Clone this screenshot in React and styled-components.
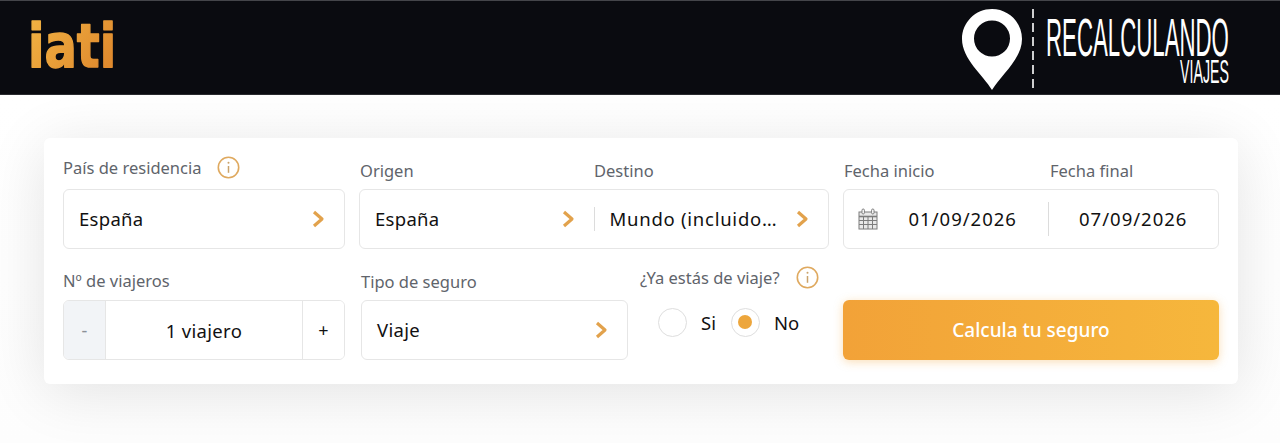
import styled, { createGlobalStyle } from "styled-components"

const GlobalStyle = createGlobalStyle`
  html, body {
    margin: 0;
    height: 100%;
    background: #fff;
    overflow: hidden;
  }
  * {
    box-sizing: border-box;
  }
  body {
    font-family: "Noto Sans", "Open Sans", sans-serif;
  }
`

const Chevron = () => (
  <ChevronSvg viewBox="0 0 14 18">
    <polyline points="3,2 11,9 3,16" fill="none" stroke="#e2a24c" strokeWidth="3.2" strokeLinejoin="round" />
  </ChevronSvg>
)

const InfoIcon = () => (
  <InfoSvg viewBox="0 0 23 23">
    <circle cx="11.5" cy="11.5" r="10.2" fill="none" stroke="#dfa95f" strokeWidth="1.6" />
    <circle cx="11.5" cy="6.800" r="1" fill="#c9a26a" />
    <line x1="11.5" y1="10" x2="11.5" y2="16.8" stroke="#c9a26a" strokeWidth="1.5" />
  </InfoSvg>
)

const CalendarIcon = () => (
  <CalendarSvg viewBox="0 0 20 22" fill="none" stroke="#7d7d7d" strokeWidth="1">
    <rect x="1" y="4" width="18" height="17" fill="#e9e9e9" />
    <line x1="1" y1="8.5" x2="19" y2="8.5" strokeWidth="1.6" />
    <path d="M1 12.5H19M1 16.5H19M5.5 8.5V21M10 8.5V21M14.5 8.5V21" />
    <rect x="4" y="1" width="2.4" height="5" rx="1.2" fill="#fff" />
    <rect x="13.6" y="1" width="2.4" height="5" rx="1.2" fill="#fff" />
  </CalendarSvg>
)

const App = () => {
  return (
    <>
      <GlobalStyle />
      <Header>
        <svg width="96" height="80" viewBox="0 0 96 80">
          <defs>
            <linearGradient id="iatiFill" x1="0" y1="0" x2="1" y2="0.6">
              <stop offset="0" stopColor="#f2b544" />
              <stop offset="1" stopColor="#df8a2e" />
            </linearGradient>
          </defs>
          <IatiText transform="translate(0 58) scale(0.8 1)">iati</IatiText>
        </svg>
        <svg width="272" height="86" viewBox="0 0 272 86">
          <path
            d="M30 0C13.4 0 0 13.4 0 30C0 50 21 66 30 81C39 66 60 50 60 30C60 13.4 46.6 0 30 0ZM30 11.500A18 18 0 1 1 30 47.500A18 18 0 1 1 30 11.500Z"
            fill="#fff"
            fillRule="evenodd"
          />
          <line x1="71" y1="0" x2="71" y2="81" stroke="#fff" strokeWidth="1.6" strokeDasharray="9 5" />
          <LogoText transform="translate(84 47) scale(0.412 1)" fontSize="54">RECALCULANDO</LogoText>
          <LogoText transform="translate(218 74) scale(0.418 1)" fontSize="34">VIAJES</LogoText>
        </svg>
      </Header>
      <Main>
        <Card>
          <TopRow>
            <Field>
              <Label $gap={16} $bottom={10}>País de residencia <InfoIcon /></Label>
              <Box>
                <Value>España</Value>
                <Chevron />
              </Box>
            </Field>
            <Field>
              <LabelPair>
                <Label>Origen</Label>
                <Label>Destino</Label>
              </LabelPair>
              <Box>
                <HalfSelect>
                  <Value>España</Value>
                  <Chevron />
                </HalfSelect>
                <Divider $short />
                <HalfSelect>
                  <Value $spread>Mundo (incluido…</Value>
                  <Chevron />
                </HalfSelect>
              </Box>
            </Field>
            <Field>
              <DateLabels>
                <Label>Fecha inicio</Label>
                <Label>Fecha final</Label>
              </DateLabels>
              <DateBox>
                <CalendarIcon />
                <DateValue>01/09/2026</DateValue>
                <Divider />
                <DateValue>07/09/2026</DateValue>
              </DateBox>
            </Field>
          </TopRow>
          <BottomRow>
            <Field>
              <Label $bottom={8}>Nº de viajeros</Label>
              <Stepper>
                <StepButton $muted>-</StepButton>
                <StepValue>1 viajero</StepValue>
                <StepButton>+</StepButton>
              </Stepper>
            </Field>
            <MiddleGroup>
              <Field>
                <Label $bottom={7}>Tipo de seguro</Label>
                <Box>
                  <Value>Viaje</Value>
                  <Chevron />
                </Box>
              </Field>
              <TripField>
                <Label $gap={16}>¿Ya estás de viaje? <InfoIcon /></Label>
                <RadioRow>
                  <Radio />
                  <RadioLabel>Si</RadioLabel>
                  <Radio $checked />
                  <RadioLabel>No</RadioLabel>
                </RadioRow>
              </TripField>
            </MiddleGroup>
            <SubmitButton>Calcula tu seguro</SubmitButton>
          </BottomRow>
        </Card>
      </Main>
    </>
  )
}

const Header = styled.header`
  height: 95px;
  background: #0a0b10;
  border-top: 1px solid #44454a;
  border-bottom: 1px solid #2a2b2f;
  display: flex;
  align-items: flex-start;
  justify-content: space-between;
  padding: 8px 46px 0 28px;
`

const IatiText = styled.text`
  font-family: "DejaVu Sans", sans-serif;
  font-weight: 700;
  font-size: 60px;
  fill: url(#iatiFill);
  stroke: url(#iatiFill);
  stroke-width: 1.5;
  stroke-linejoin: round;
`

const LogoText = styled.text`
  font-family: "Liberation Sans", sans-serif;
  fill: #fff;
`

const Main = styled.main`
  height: 348px;
  padding: 43px 42px 0 44px;
  background: linear-gradient(#fff, #fdfdfd);
`

const Card = styled.section`
  height: 246px;
  padding: 0 19px;
  background: #fff;
  border-radius: 6px;
  box-shadow: 0 8px 60px rgba(0, 0, 0, 0.11);
`

const TopRow = styled.div`
  display: grid;
  grid-template-columns: 282px 470px 376px;
  column-gap: 14px;
  align-items: end;
  height: 111px;
`

const BottomRow = styled.div`
  display: grid;
  grid-template-columns: 282px 470px 376px;
  column-gap: 14px;
  align-items: end;
  height: 111px;
`

const MiddleGroup = styled.div`
  display: grid;
  grid-template-columns: 267px 1fr;
  column-gap: 12px;
  align-items: start;
  padding: 0 0 0 2px;
`

const Field = styled.div`
  display: flex;
  flex-direction: column;
  min-width: 0;
`

const TripField = styled(Field)`
  margin-top: -4px;
`

const Label = styled.div`
  display: flex;
  align-items: center;
  gap: ${(p) => p.$gap || 0}px;
  height: 24px;
  margin-bottom: ${(p) => p.$bottom || 7}px;
  color: #60646b;
  font-size: 16.5px;
  white-space: nowrap;
`

const LabelPair = styled.div`
  display: grid;
  grid-template-columns: 234px 1fr;
  padding-left: 1px;
`

const DateLabels = styled.div`
  display: grid;
  grid-template-columns: 206px 1fr;
  padding-left: 1px;
`

const Box = styled.div`
  height: 60px;
  display: flex;
  align-items: center;
  justify-content: space-between;
  padding: 0 19px 0 15px;
  background: #fff;
  border: 1px solid #e6e6e6;
  border-radius: 6px;
`

const HalfSelect = styled.div`
  flex: 1;
  min-width: 0;
  display: flex;
  align-items: center;
  justify-content: space-between;

  &:first-child {
    padding-right: 19px;
  }

  &:last-child {
    padding-left: 15px;
  }
`

const Value = styled.span`
  padding-bottom: 2px;
  color: #111;
  font-size: 18.5px;
  letter-spacing: ${(p) => (p.$spread ? 0.75 : 0.3)}px;
  white-space: nowrap;
`

const Divider = styled.span`
  width: 1px;
  height: ${(p) => (p.$short ? 24 : 34)}px;
  background: #dcdcdc;
  flex: none;
`

const DateBox = styled(Box)`
  padding: 0 0 0 14px;
  justify-content: flex-start;
`

const DateValue = styled.span`
  flex: 1;
  padding-bottom: 2px;
  text-align: center;
  color: #111;
  font-size: 18.5px;
  letter-spacing: 1px;
`

const Stepper = styled.div`
  height: 60px;
  display: flex;
  align-items: stretch;
  border: 1px solid #e6e6e6;
  border-radius: 6px;
  overflow: hidden;
`

const StepButton = styled.div`
  width: 42px;
  display: flex;
  align-items: center;
  justify-content: center;
  font-size: 18px;
  color: ${(p) => (p.$muted ? "#8b9097" : "#111")};
  background: ${(p) => (p.$muted ? "#f2f4f7" : "#fff")};
  border-${(p) => (p.$muted ? "right" : "left")}: 1px solid #e6e6e6;
`

const StepValue = styled.div`
  flex: 1;
  display: flex;
  align-items: center;
  justify-content: center;
  color: #111;
  font-size: 18.5px;
  letter-spacing: 0.3px;
`

const RadioRow = styled.div`
  display: flex;
  align-items: center;
  height: 32px;
  margin-top: 10px;
  padding-left: 18px;
`

const Radio = styled.span`
  width: 29px;
  height: 29px;
  border-radius: 50%;
  border: 1px solid #dedede;
  background: #fff;
  display: flex;
  align-items: center;
  justify-content: center;

  &::after {
    content: "";
    display: ${(p) => (p.$checked ? "block" : "none")};
    width: 14px;
    height: 14px;
    border-radius: 50%;
    background: #eda63c;
  }
`

const RadioLabel = styled.span`
  margin: 0 15px 0 14px;
  color: #111;
  font-size: 18.5px;
`

const SubmitButton = styled.button`
  height: 60px;
  border: 0;
  border-radius: 6px;
  font-family: inherit;
  font-size: 19px;
  font-weight: 500;
  color: #fff;
  background: linear-gradient(90deg, #f2a238, #f6b73c);
  box-shadow: 0 2px 10px rgba(240, 160, 50, 0.35);
`

const ChevronSvg = styled.svg`
  width: 14px;
  height: 18px;
  flex: none;
`

const InfoSvg = styled.svg`
  width: 23px;
  height: 23px;
  flex: none;
`

const CalendarSvg = styled.svg`
  width: 20px;
  height: 22px;
  flex: none;
`

export default App
